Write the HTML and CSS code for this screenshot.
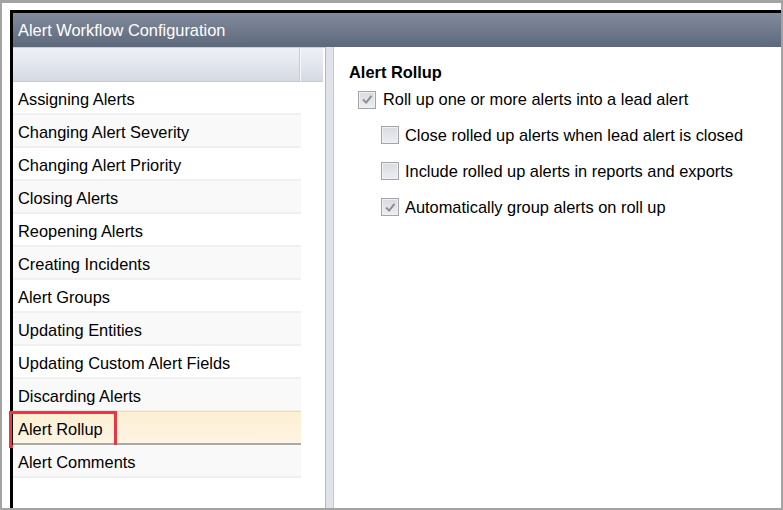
FILE: index.html
```html
<!DOCTYPE html>
<html>
<head>
<meta charset="utf-8">
<link rel="stylesheet" href="styles.css">
</head>
<body>
<div class="frame">
  <div class="window">
    <div class="titlebar">Alert Workflow Configuration</div>
    <div class="main">
      <div class="sidebar">
        <div class="list-header">
          <div class="hcell hcell-main"></div>
          <div class="hcell hcell-side"></div>
        </div>
        <div class="list">
          <div class="item">Assigning Alerts</div>
          <div class="item alt">Changing Alert Severity</div>
          <div class="item">Changing Alert Priority</div>
          <div class="item alt">Closing Alerts</div>
          <div class="item">Reopening Alerts</div>
          <div class="item alt">Creating Incidents</div>
          <div class="item">Alert Groups</div>
          <div class="item alt">Updating Entities</div>
          <div class="item">Updating Custom Alert Fields</div>
          <div class="item alt">Discarding Alerts</div>
          <div class="item selected">Alert Rollup<span class="highlight"></span></div>
          <div class="item alt">Alert Comments</div>
        </div>
      </div>
      <div class="splitter"></div>
      <div class="content">
        <div class="heading">Alert Rollup</div>
        <div class="opt first">
          <span class="cb"><svg viewBox="0 0 17 17" width="15" height="15"><polyline points="3.5,8.5 7,12 13,4.5" fill="none" stroke="#8d8d8d" stroke-width="2.2"/></svg></span>
          <span>Roll up one or more alerts into a lead alert</span>
        </div>
        <div class="opt sub">
          <span class="cb"></span>
          <span>Close rolled up alerts when lead alert is closed</span>
        </div>
        <div class="opt sub">
          <span class="cb"></span>
          <span>Include rolled up alerts in reports and exports</span>
        </div>
        <div class="opt sub">
          <span class="cb"><svg viewBox="0 0 17 17" width="15" height="15"><polyline points="3.5,8.5 7,12 13,4.5" fill="none" stroke="#8d8d8d" stroke-width="2.2"/></svg></span>
          <span>Automatically group alerts on roll up</span>
        </div>
      </div>
    </div>
  </div>
</div>
</body>
</html>
```
FILE: styles.css
```css
* { box-sizing: border-box; }
html, body { margin: 0; padding: 0; background: #fff; }
body {
  font-family: "Liberation Sans", Arial, sans-serif;
  font-size: 16.4px;
  color: #000;
}
.frame {
  width: 783px;
  height: 510px;
  border-top: 3px solid #a3a3a3;
  border-left: 2px solid #a3a3a3;
  border-right: 2px solid #a3a3a3;
  border-bottom: 2px solid #a3a3a3;
  padding: 7px 0 0 8px;
  background: #fff;
}
.window {
  height: 100%;
  border-top: 3px solid #000;
  border-left: 3px solid #000;
  display: flex;
  flex-direction: column;
}
.titlebar {
  height: 34px;
  flex: none;
  background: linear-gradient(#818b9d, #5e687b);
  color: #fff;
  display: flex;
  align-items: center;
  padding-left: 5px;
  padding-top: 1px;
}
.main {
  flex: 1;
  display: flex;
  min-height: 0;
}
.sidebar {
  width: 312px;
  flex: none;
  background: #fff;
  display: flex;
  flex-direction: column;
}
.list-header {
  height: 35px;
  display: flex;
  border-top: 1px solid #c9d0de;
  padding-right: 1px;
}
.hcell {
  height: 100%;
  background: linear-gradient(#eef0f6 0%, #e4e7ee 45%, #d5d9e1 100%);
  border-bottom: 1px solid #c6cad2;
}
.hcell-main {
  width: 287px;
  border-right: 1px solid #c8ccd4;
}
.hcell-side {
  width: 23px;
  border-left: 1px solid #f7f8fb;
}
.list {
  display: flex;
  flex-direction: column;
}
.item {
  width: 288px;
  height: 33px;
  padding-left: 5px;
  display: flex;
  align-items: center;
  background: #fff;
  border-bottom: 2px solid #f0f0f0;
  position: relative;
  padding-top: 3px;
}
.item.alt { background: #f9f9f9; }
.item.selected {
  background: linear-gradient(#fcefd3, #fdf4e2);
  border-top: 1px solid #efdcb0;
  border-bottom: 2px solid #a9a9a9;
  margin-top: -1px;
  height: 34px;
}
.highlight {
  position: absolute;
  left: -4px;
  top: -1px;
  width: 108px;
  height: 37px;
  border: 3px solid #e8383f;
}
.splitter {
  width: 9px;
  flex: none;
  background: #e0e3ea;
  border-left: 1px solid #b3b8c3;
  border-right: 1px solid #c3c7cf;
}
.content {
  flex: 1;
  background: #fff;
  padding: 15px 0 0 15px;
}
.heading {
  font-weight: bold;
  height: 20px;
  line-height: 20px;
}
.opt {
  height: 36px;
  display: flex;
  align-items: center;
  padding-left: 9px;
}
.opt.first { height: 35px; }
.opt.sub { padding-left: 32px; }
.cb {
  width: 18px;
  height: 18px;
  flex: none;
  border: 1px solid #a3a3a8;
  background: linear-gradient(#dadbe2, #eceef3);
  box-shadow: inset 0 0 0 1px #eef0f4;
  margin-right: 7px;
  display: flex;
  align-items: center;
  justify-content: center;
}
.opt.sub .cb { margin-right: 6px; }
```
